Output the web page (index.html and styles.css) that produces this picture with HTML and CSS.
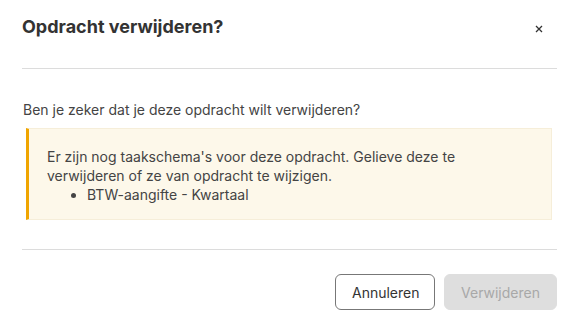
FILE: index.html
```html
<!doctype html>
<html>
<head>
<meta charset="utf-8">
<title>Opdracht verwijderen</title>
<link rel="stylesheet" href="styles.css">
</head>
<body>
<div class="modal">
    <div class="modal-header">
        <h2 class="modal-title">Opdracht verwijderen?</h2>
        <button class="modal-close" type="button" aria-label="Sluiten">
            <svg width="8" height="8" viewBox="0 0 8 8"><path d="M1 1L7 7M7 1L1 7" stroke="#333" stroke-width="1.3" fill="none"/></svg>
        </button>
    </div>
    <div class="modal-body">
        <p class="question">Ben je zeker dat je deze opdracht wilt verwijderen?</p>
        <div class="warning">
            <p>Er zijn nog taakschema's voor deze opdracht. Gelieve deze te verwijderen of ze van opdracht te wijzigen.</p>
            <ul>
                <li>BTW-aangifte - Kwartaal</li>
            </ul>
        </div>
    </div>
    <div class="modal-footer">
        <button class="btn btn-cancel" type="button">Annuleren</button>
        <button class="btn btn-delete" type="button" disabled>Verwijderen</button>
    </div>
</div>
</body>
</html>
```

FILE: styles.css
```css
body {
    margin: 0;
    background: #fff;
    font-family: Inter, "Noto Sans", sans-serif;
    color: #444;
}
.modal {
    padding: 0 23px 0 22px;
}
.modal-header {
    display: flex;
    align-items: flex-start;
    justify-content: space-between;
    padding: 16px 0 30px;
    border-bottom: 1px solid #dcdcdc;
}
.modal-title {
    margin: 0;
    font-size: 18px;
    line-height: 22px;
    font-weight: 700;
    color: #333;
}
.modal-close {
    border: none;
    background: none;
    padding: 0;
    margin: 9px 14px 0 0;
    width: 8px;
    height: 8px;
    display: flex;
}
.modal-body {
    padding: 31px 0 29px 1px;
    border-bottom: 1px solid #dcdcdc;
}
.question {
    margin: 0 0 8px;
    font-size: 14px;
    line-height: 20px;
}
.warning {
    margin: 0 5px 0 3px;
    padding: 18px 16px 15px 18px;
    background: #fdf8ea;
    border: 1px solid #f6eed9;
    border-left: 3px solid #f0a500;
    font-size: 14px;
    line-height: 19px;
}
.warning p {
    margin: 0;
    padding-right: 60px;
}
.warning ul {
    margin: 0;
    padding-left: 40px;
}
.modal-footer {
    display: flex;
    justify-content: flex-end;
    gap: 9px;
    padding-top: 24px;
}
.btn {
    height: 36px;
    padding: 0 16px;
    border-radius: 6px;
    font-family: Inter, "Noto Sans", sans-serif;
    font-size: 14px;
}
.btn-cancel {
    width: 100px;
    background: #fff;
    border: 1px solid #777;
    color: #333;
}
.btn-delete {
    width: 113px;
    background: #dedede;
    border: 1px solid #dedede;
    color: #a8a8a8;
}
```
